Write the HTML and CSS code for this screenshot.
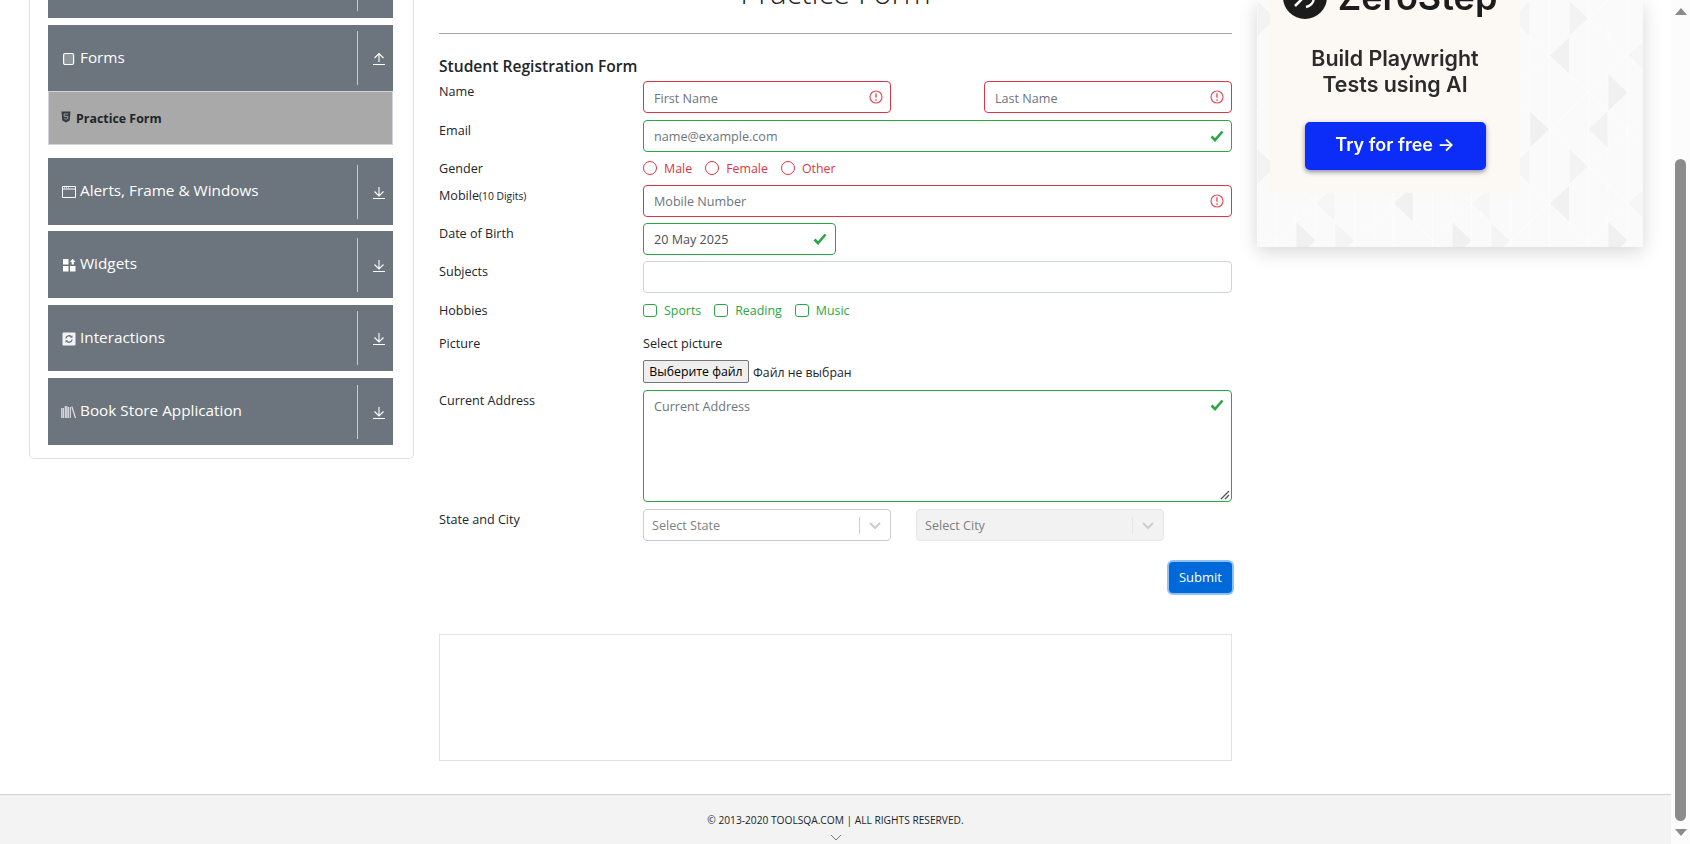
FILE: index.html
```html
<!DOCTYPE html>
<html>
	<head>
		<meta charset="UTF-8">
		<title>Practice Form</title>
		<link rel="stylesheet" href="styles.css">
	</head>
	<body>
		<div class="page">
			<div class="content">
				<div class="columns">
					<div class="side">
						<div class="group-card">
							<div class="bar bar-cut"><span class="bar-rule"></span></div>
							<div class="bar bar-forms">
								<span class="bar-icon">
									<svg width="14" height="14" viewBox="0 0 14 14"><rect x="1.6" y="1.5" width="10" height="11" rx="1.5" fill="#8f959b" stroke="#fff" stroke-width="1.2"/></svg>
								</span>
								<span class="bar-text">Forms</span>
								<span class="bar-rule"></span>
								<span class="bar-arrow">
									<svg width="14" height="14" viewBox="0 0 14 14"><path d="M7 10V1.5M2.5 6 7 1.5 11.5 6M1 12.5h12" fill="none" stroke="#fff" stroke-width="1.1"/></svg>
								</span>
							</div>
							<div class="sub-item">
								<svg width="10" height="12" viewBox="0 0 10 12"><path d="M0.5 0.5h9l-0.8 9-3.7 2-3.7-2z" fill="#333a40"/><path d="M7.2 3H3l0.2 2.4h3.7l-0.2 2.2-1.7 0.6-1.7-0.6" fill="none" stroke="#a8a8a8" stroke-width="0.9"/></svg>
								<span>Practice Form</span>
							</div>
							<div class="bar bar-first">
								<span class="bar-icon">
									<svg width="14" height="14" viewBox="0 0 14 14"><path d="M0.5 1.5h13v11h-13zM0.5 4h13" fill="none" stroke="#fff" stroke-width="1"/><path d="M2 2.8h1M4 2.8h1M6 2.8h1" stroke="#fff" stroke-width="0.8"/></svg>
								</span>
								<span class="bar-text">Alerts, Frame &amp; Windows</span>
								<span class="bar-rule"></span>
								<span class="bar-arrow">
									<svg width="14" height="14" viewBox="0 0 14 14"><path d="M7 1v8.5M2.500 5.500 7 10l4.500-4.500M1 12.500h12" fill="none" stroke="#fff" stroke-width="1.1"/></svg>
								</span>
							</div>
							<div class="bar bar-wide-gap">
								<span class="bar-icon">
									<svg width="14" height="14" viewBox="0 0 14 14"><path d="M1 1h5.500v5.500H1zM1 8h5.500v5.500H1zM8 8h5.500v5.500H8zM10.700 0.800 13.500 4l-1.700 0v2.500H9.600V4H7.900z" fill="#fff"/></svg>
								</span>
								<span class="bar-text">Widgets</span>
								<span class="bar-rule"></span>
								<span class="bar-arrow">
									<svg width="14" height="14" viewBox="0 0 14 14"><path d="M7 1v8.5M2.500 5.500 7 10l4.500-4.500M1 12.500h12" fill="none" stroke="#fff" stroke-width="1.1"/></svg>
								</span>
							</div>
							<div class="bar bar-short">
								<span class="bar-icon">
									<svg width="14" height="14" viewBox="0 0 14 14"><rect x="0.5" y="0.5" width="13" height="13" rx="1" fill="#f2f3f4"/><path d="M3.800 6.500a3.300 3.300 0 0 1 5.800-1.500M10.200 7.500a3.300 3.300 0 0 1-5.800 1.500" fill="none" stroke="#6c757d" stroke-width="1.3"/><path d="M10.500 3.200v2.500H8zM3.500 10.800V8.300H6z" fill="#6c757d"/></svg>
								</span>
								<span class="bar-text">Interactions</span>
								<span class="bar-rule"></span>
								<span class="bar-arrow">
									<svg width="14" height="14" viewBox="0 0 14 14"><path d="M7 1v8.5M2.500 5.500 7 10l4.500-4.500M1 12.500h12" fill="none" stroke="#fff" stroke-width="1.1"/></svg>
								</span>
							</div>
							<div class="bar">
								<span class="bar-icon icon-books">
									<svg width="16" height="14" viewBox="0 0 16 14"><path d="M0.800 3v10M2.300 3v10M4.300 1v12M5.800 1v12M7.300 2v11M9.300 2v11M10.800 1.500 14.500 13" fill="none" stroke="#e4e6e8" stroke-width="1.1"/></svg>
								</span>
								<span class="bar-text">Book Store Application</span>
								<span class="bar-rule"></span>
								<span class="bar-arrow">
									<svg width="14" height="14" viewBox="0 0 14 14"><path d="M7 1v8.5M2.500 5.500 7 10l4.500-4.500M1 12.500h12" fill="none" stroke="#fff" stroke-width="1.1"/></svg>
								</span>
							</div>
						</div>
					</div>

					<div class="middle">
						<h1 class="page-title">Practice Form</h1>
						<hr class="title-rule">
						<h5 class="form-title">Student Registration Form</h5>

						<div class="row row-name">
							<div class="label">Name</div>
							<div class="fields two">
								<div class="input bad half"><span class="ph">First Name</span>
									<svg class="err" width="14" height="14" viewBox="0 0 14 14"><circle cx="7" cy="7" r="6" fill="none" stroke="#e04f5d" stroke-width="1.2"/><path d="M7 3.200v4.600M7 9.300v1.500" stroke="#dc3545" stroke-width="1.2"/></svg>
								</div>
								<div class="input bad half"><span class="ph">Last Name</span>
									<svg class="err" width="14" height="14" viewBox="0 0 14 14"><circle cx="7" cy="7" r="6" fill="none" stroke="#e04f5d" stroke-width="1.2"/><path d="M7 3.200v4.600M7 9.300v1.500" stroke="#dc3545" stroke-width="1.2"/></svg>
								</div>
							</div>
						</div>
						<div class="row row-email">
							<div class="label">Email</div>
							<div class="fields">
								<div class="input good"><span class="ph">name@example.com</span>
									<svg class="tick" width="14" height="12" viewBox="0 0 14 12"><path d="M1.500 6.500 5 10l7.500-8.500" fill="none" stroke="#28a745" stroke-width="2.6"/></svg>
								</div>
							</div>
						</div>
						<div class="row row-gender">
							<div class="label label-flat">Gender</div>
							<div class="fields choices red">
								<span class="radio"></span><span class="choice">Male</span>
								<span class="radio"></span><span class="choice">Female</span>
								<span class="radio"></span><span class="choice">Other</span>
							</div>
						</div>
						<div class="row row-mobile">
							<div class="label">Mobile<small>(10 Digits)</small></div>
							<div class="fields">
								<div class="input bad"><span class="ph">Mobile Number</span>
									<svg class="err" width="14" height="14" viewBox="0 0 14 14"><circle cx="7" cy="7" r="6" fill="none" stroke="#e04f5d" stroke-width="1.2"/><path d="M7 3.200v4.600M7 9.300v1.500" stroke="#dc3545" stroke-width="1.2"/></svg>
								</div>
							</div>
						</div>
						<div class="row row-dob">
							<div class="label">Date of Birth</div>
							<div class="fields">
								<div class="input good dob"><span class="val">20 May 2025</span>
									<svg class="tick" width="14" height="12" viewBox="0 0 14 12"><path d="M1.500 6.500 5 10l7.500-8.500" fill="none" stroke="#28a745" stroke-width="2.6"/></svg>
								</div>
							</div>
						</div>
						<div class="row row-subjects">
							<div class="label">Subjects</div>
							<div class="fields"><div class="input plain"></div></div>
						</div>
						<div class="row row-hobbies">
							<div class="label label-flat">Hobbies</div>
							<div class="fields choices green">
								<span class="check"></span><span class="choice">Sports</span>
								<span class="check"></span><span class="choice">Reading</span>
								<span class="check"></span><span class="choice">Music</span>
							</div>
						</div>
						<div class="row row-picture">
							<div class="label label-flat">Picture</div>
							<div class="fields stack">
								<div class="select-pic">Select picture</div>
								<div class="file-line"><span class="file-btn">Выберите файл</span><span class="file-name">Файл не выбран</span></div>
							</div>
						</div>
						<div class="row row-address">
							<div class="label">Current Address</div>
							<div class="fields">
								<div class="input good area"><span class="ph">Current Address</span>
									<svg class="tick" width="14" height="12" viewBox="0 0 14 12"><path d="M1.500 6.500 5 10l7.500-8.500" fill="none" stroke="#28a745" stroke-width="2.6"/></svg>
									<svg class="grip" width="10" height="10" viewBox="0 0 10 10"><path d="M1 9 9 1M5 9 9 5" stroke="#555" stroke-width="1.3"/></svg>
								</div>
							</div>
						</div>
						<div class="row row-state">
							<div class="label">State and City</div>
							<div class="fields two-select">
								<div class="select">
									<span class="select-ph">Select State</span>
									<span class="select-rule"></span>
									<svg class="select-arrow" width="20" height="20" viewBox="0 0 20 20"><path d="M5 8l5 5 5-5" fill="none" stroke="#cccccc" stroke-width="2"/></svg>
								</div>
								<div class="select off">
									<span class="select-ph">Select City</span>
									<span class="select-rule"></span>
									<svg class="select-arrow" width="20" height="20" viewBox="0 0 20 20"><path d="M5 8l5 5 5-5" fill="none" stroke="#cccccc" stroke-width="2"/></svg>
								</div>
							</div>
						</div>
						<div class="submit-row"><span class="submit">Submit</span></div>
						<div class="blank-box"></div>
					</div>

					<div class="right">
						<div class="ad">
							<svg class="ad-pattern" width="386" height="247">
								<defs>
									<pattern id="tri" width="156" height="148" patternUnits="userSpaceOnUse">
										<polygon points="0,0 19.5,18.5 0,37" fill="#f3f3f3"/>
										<polygon points="39,74 58.5,92.5 39,111" fill="#f0f0f0"/>
										<polygon points="97.5,18.5 117,0 117,37" fill="#f5f5f5"/>
										<polygon points="136.5,55.500 156,37 156,74" fill="#f1f1f1"/>
										<polygon points="78,74 97.5,92.500 78,111" fill="#f4f4f4"/>
										<polygon points="19.5,129.500 39,111 39,148" fill="#f2f2f2"/>
										<polygon points="117,111 136.500,129.500 117,148" fill="#f0f0f0"/>
										<polygon points="58.5,55.500 78,37 78,74" fill="#f6f6f6"/>
										<path d="M0 0 156 148M0 74 78 148M78 0 156 74M0 37 39 0M0 111 117 0M39 148 156 37M117 148 156 111M19.500 0v148M58.500 0v148M97.500 0v148M136.500 0v148M0 0v148M39 0v148M78 0v148M117 0v148" fill="none" stroke="#fff" stroke-width="0.6"/>
									</pattern>
								</defs>
								<rect width="386" height="247" fill="url(#tri)"/>
							</svg>
							<div class="ad-panel">
								<div class="ad-logo">
									<svg width="44" height="44" viewBox="0 0 44 44"><circle cx="22" cy="22" r="22" fill="#1c1c1c"/><path d="M12 31 31 12M24 12h7v7M13 22a10 10 0 0 1 8-9M31 23a10 10 0 0 1-8 9" stroke="#fff" stroke-width="2.5" fill="none"/></svg>
									<span>ZeroStep</span>
								</div>
								<div class="ad-text">Build Playwright<br>Tests using AI</div>
								<div class="ad-btn">Try for free →</div>
							</div>
						</div>
					</div>
				</div>
				<div class="foot">
					<span>© 2013-2020 TOOLSQA.COM | ALL RIGHTS RESERVED.</span>
					<svg class="foot-arrow" width="12" height="7" viewBox="0 0 12 7"><path d="M1 1l5 5 5-5" fill="none" stroke="#777" stroke-width="1"/></svg>
				</div>
			</div>
			<div class="scroll">
				<span class="sc-up"></span>
				<span class="sc-gap"></span>
				<span class="sc-thumb"></span>
				<span class="sc-down"></span>
			</div>
		</div>
	</body>
</html>
```
FILE: styles.css
```css
*{
	box-sizing: border-box;
	margin: 0;
	padding: 0;
}
html,body{
	height: 844px;
	overflow: hidden;
	background: #fff;
}
body{
	font-family: "Open Sans", "Noto Sans", sans-serif;
	font-size: 12.6px;
	color: #212529;
}
.page{
	display: flex;
	height: 844px;
}
.content{
	flex: 1;
	display: flex;
	flex-direction: column;
	height: 844px;
	overflow: hidden;
}
.columns{
	flex: 1;
	display: flex;
	height: 794px;
	padding-left: 29px;
	min-height: 0;
}

/* left menu */
.side{
	width: 385px;
	flex: none;
	margin-right: 25px;
}
.group-card{
	height: 459px;
	border: 1px solid #dfdfdf;
	border-top: 0;
	border-radius: 0 0 5px 5px;
	padding: 0 20px 0 18px;
}
.bar{
	height: 67px;
	margin-bottom: 6px;
	background: #6c757d;
	color: #fff;
	display: flex;
	align-items: center;
}
.bar-cut{
	height: 18px;
	margin-bottom: 7px;
	justify-content: flex-end;
}
.bar-cut .bar-rule{
	height: 11px;
	margin: -7px 35px 0 0;
}
.bar-forms{
	height: 66px;
	margin-bottom: 0;
}
.bar-first{
	margin-top: 13px;
}
.bar-wide-gap{
	margin-bottom: 7px;
}
.bar-short{
	height: 66px;
	margin-bottom: 7px;
}
.bar-icon{
	width: 32px;
	padding-left: 14px;
	flex: none;
	display: flex;
	margin-top: 1px;
}
.icon-books svg{
	margin-left: -1px;
}
.bar-text{
	flex: 1;
	font-size: 15.3px;
	margin-top: -3px;
}
.bar-rule{
	width: 1px;
	height: 54px;
	background: #c6cacd;
	flex: none;
}
.bar-arrow{
	width: 35px;
	flex: none;
	display: flex;
	justify-content: center;
	padding-left: 6px;
	margin-top: 2px;
}
.sub-item{
	height: 54px;
	background: #a9a9a9;
	border: 1px solid #d0d3d8;
	display: flex;
	align-items: center;
	padding-left: 12px;
	font-weight: 700;
	font-size: 12.4px;
	color: #212529;
}
.sub-item svg{
	margin-right: 5px;
	margin-top: -2px;
}

/* form */
.middle{
	width: 793px;
	flex: none;
	margin-right: 25px;
}
.page-title{
	font-size: 30.8px;
	font-weight: 300;
	text-align: center;
	line-height: 40px;
	margin-top: -28px;
	height: 40px;
}
.title-rule{
	border: 0;
	border-top: 1px solid #aaa;
	margin-top: 21px;
}
.form-title{
	font-size: 15.6px;
	font-weight: 600;
	line-height: 22px;
	margin-top: 21px;
	height: 26px;
}
.row{
	display: flex;
	margin-bottom: 7px;
}
.label{
	width: 204px;
	flex: none;
	line-height: 18px;
	padding-top: 2px;
}
.label-flat{
	padding-top: 1px;
}
.label small{
	font-size: 10.3px;
}
.fields{
	flex: 1;
	min-width: 0;
}
.two{
	display: flex;
	justify-content: space-between;
}
.input{
	height: 32px;
	border: 1px solid #ced4da;
	border-radius: 4px;
	display: flex;
	align-items: center;
	justify-content: space-between;
	padding: 0 7px 0 10px;
	position: relative;
}
.half{
	width: 248px;
}
.bad{
	border-color: #dc3545;
}
.good{
	border-color: #28a745;
}
.plain{
	border-color: #ced4da;
}
.dob{
	width: 193px;
	padding-right: 8px;
}
.ph{
	color: #6c757d;
	padding-top: 1px;
}
.row-name .ph{
	padding-top: 3px;
}
.val{
	color: #495057;
}
.err{
	flex: none;
}
.tick{
	flex: none;
	margin-top: -1px;
}
.choices{
	display: flex;
	align-items: center;
	height: 18px;
}
.red{
	color: #dc3545;
}
.green{
	color: #28a745;
}
.radio{
	width: 14px;
	height: 14px;
	border: 1px solid #dc3545;
	border-radius: 50%;
	margin-right: 7px;
	flex: none;
}
.check{
	width: 14px;
	height: 13px;
	border: 1px solid #28a745;
	border-radius: 3px;
	margin-right: 7px;
	flex: none;
}
.choice{
	font-size: 12.4px;
	margin-right: 13px;
}
.row-gender{
	height: 18px;
	margin-bottom: 8px;
}
.row-mobile,
.row-dob{
	margin-bottom: 6px;
}
.row-subjects{
	margin-bottom: 8px;
}
.row-hobbies{
	height: 18px;
	margin-bottom: 15px;
}
.stack{
	display: flex;
	flex-direction: column;
}
.select-pic{
	line-height: 18px;
	margin-bottom: 8px;
	padding-top: 1px;
	height: 18px;
}
.file-line{
	display: flex;
	align-items: center;
	height: 23px;
}
.file-btn{
	width: 106px;
	height: 23px;
	background: #efefef;
	border: 1px solid #767676;
	border-radius: 2px;
	text-align: center;
	line-height: 22px;
	color: #000;
	font-size: 12.3px;
	margin-right: 4px;
}
.file-name{
	font-size: 12.3px;
	padding-top: 1px;
}
.area{
	height: 112px;
	align-items: flex-start;
	padding-top: 6px;
}
.area .tick{
	margin-top: 2px;
}
.grip{
	position: absolute;
	right: 1px;
	bottom: 1px;
}
.two-select{
	display: flex;
	gap: 25px;
}
.select{
	width: 248px;
	height: 32px;
	border: 1px solid #cccccc;
	border-radius: 4px;
	display: flex;
	align-items: center;
	padding-left: 8px;
	color: #808080;
}
.select-ph{
	flex: 1;
}
.select-rule{
	width: 1px;
	height: 17px;
	background: #cccccc;
	flex: none;
}
.select-arrow{
	margin: 0 5px;
	flex: none;
}
.select.off{
	background: #f2f2f2;
	border-color: #e6e6e6;
}
.select.off .select-rule{
	background: #e6e6e6;
}
.submit-row{
	display: flex;
	justify-content: flex-end;
	margin-top: 21px;
}
.submit{
	width: 63px;
	height: 31px;
	background: #0069d9;
	color: #fff;
	border-radius: 4px;
	text-align: center;
	line-height: 31px;
	font-size: 13px;
	box-shadow: 0 0 0 2px #8fc1f7;
}
.blank-box{
	height: 127px;
	border: 1px solid #e2e2e2;
	margin-top: 41px;
}

/* advert */
.right{
	width: 386px;
	flex: none;
}
.ad{
	width: 386px;
	height: 247px;
	background: #fafafa;
	box-shadow: 0 5px 18px rgba(0,0,0,0.16);
	padding-left: 13px;
	position: relative;
}
.ad-pattern{
	position: absolute;
	left: 0;
	top: 0;
}
.ad-panel{
	position: relative;
	width: 250px;
	height: 193px;
	background: #fcf8f3;
	display: flex;
	flex-direction: column;
	align-items: center;
	filter: blur(0.4px);
}
.ad-logo{
	display: flex;
	align-items: center;
	gap: 11px;
	height: 44px;
	margin-top: -25px;
	margin-right: 10px;
	font-family: "Inter", sans-serif;
	font-weight: 600;
	font-size: 36px;
	color: #1c1c1c;
}
.ad-logo svg{
	flex: none;
}
.ad-text{
	font-family: "Inter", sans-serif;
	font-weight: 600;
	font-size: 21.4px;
	line-height: 26px;
	text-align: center;
	color: #2b2b2b;
	margin-top: 26px;
}
.ad-btn{
	width: 181px;
	height: 48px;
	background: #0c2cf7;
	border-radius: 5px;
	color: #fff;
	font-family: "Inter", sans-serif;
	font-weight: 600;
	font-size: 18px;
	text-align: center;
	line-height: 46px;
	margin-top: 25px;
	box-shadow: 0 2px 5px rgba(0,0,60,0.45);
}

/* footer */
.foot{
	height: 50px;
	flex: none;
	background: #f3f3f3;
	border-top: 1px solid #cfcfcf;
	display: flex;
	flex-direction: column;
	align-items: center;
	font-size: 10.2px;
	padding-top: 17px;
	color: #212529;
}
.foot span{
	line-height: 16px;
}
.foot-arrow{
	margin-top: 6px;
}

/* browser scrollbar */
.scroll{
	width: 19px;
	flex: none;
	background: #fcfcfc;
	display: flex;
	flex-direction: column;
	align-items: center;
}
.sc-up{
	width: 0;
	height: 0;
	border-left: 6.5px solid transparent;
	border-right: 6.5px solid transparent;
	border-bottom: 7px solid #8b8b8b;
	margin-top: 8px;
}
.sc-gap{
	height: 144px;
	flex: none;
}
.sc-thumb{
	width: 11px;
	flex: 1;
	background: #8b8b8b;
	border-radius: 6px;
}
.sc-down{
	width: 0;
	height: 0;
	border-left: 6.5px solid transparent;
	border-right: 6.5px solid transparent;
	border-top: 7px solid #8b8b8b;
	margin: 8px 0 8px;
}
```
